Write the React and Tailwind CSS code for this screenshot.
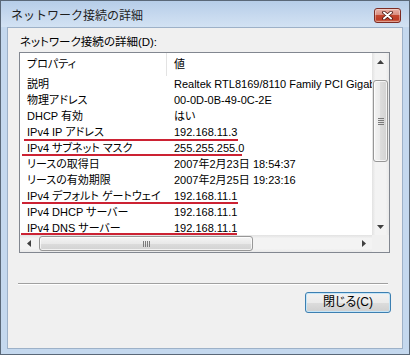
const rows = [
  { name: "説明", value: "Realtek RTL8169/8110 Family PCI Gigabit Ethernet NIC (NDIS 6.0)" },
  { name: "物理アドレス", value: "00-0D-0B-49-0C-2E" },
  { name: "DHCP 有効", value: "はい" },
  { name: "IPv4 IP アドレス", value: "192.168.11.3", mark: "left-[4px] w-[214px] bottom-[-1px]" },
  { name: "IPv4 サブネット マスク", value: "255.255.255.0", mark: "left-[2px] w-[220px] bottom-0" },
  { name: "リースの取得日", value: "2007年2月23日 18:54:37" },
  { name: "リースの有効期限", value: "2007年2月25日 19:23:16" },
  { name: "IPv4 デフォルト ゲートウェイ", value: "192.168.11.1", mark: "left-[2px] w-[216px] bottom-0" },
  { name: "IPv4 DHCP サーバー", value: "192.168.11.1" },
  { name: "IPv4 DNS サーバー", value: "192.168.11.1", mark: "left-[1px] w-[216px] bottom-[1px]" },
];

const Arrow = ({ dir }) => {
  const d = {
    up: "M3.5 0 L7 4 L0 4Z",
    down: "M0 0 L7 0 L3.5 4Z",
    left: "M4 0 L4 7 L0 3.5Z",
    right: "M0 0 L4 3.5 L0 7Z",
  }[dir];
  const vert = dir === "up" || dir === "down";
  return (
    <svg width={vert ? 7 : 4} height={vert ? 4 : 7} viewBox={vert ? "0 0 7 4" : "0 0 4 7"}>
      <path d={d} fill="#404040" />
    </svg>
  );
};

export default function App() {
  return (
    <div className="w-[410px] h-[355px] bg-[#c4d8ee] border border-[#5a6878] flex flex-col font-['Liberation_Sans','Noto_Sans_CJK_JP',sans-serif] text-[11px] text-black">
      {/* title bar */}
      <div className="h-[26px] flex items-start justify-between pl-[10px] pr-[8px] bg-[linear-gradient(to_bottom,#b6cde8,#c8daef_60%,#d2e2f3)]">
        <span className="mt-[5px] leading-[18px] text-[12px] text-[#1e1e1e] font-['Noto_Sans_CJK_JP',sans-serif]">ネットワーク接続の詳細</span>
        <div className="mt-[7px] w-[27px] h-[15px] rounded-[3px] border border-[#7d2c24] flex items-center justify-center bg-[linear-gradient(to_bottom,#e9b2a8_0%,#d98d80_45%,#c4472f_50%,#bd3c27_80%,#d4775c_100%)] shadow-[inset_0_0_0_1px_rgba(255,255,255,0.35)]">
          <svg width="11" height="9" viewBox="0 0 11 9">
            <path d="M2 1.5 L9 7.5 M9 1.5 L2 7.5" stroke="#4a1610" strokeWidth="3.6" strokeLinecap="round" />
            <path d="M2 1.5 L9 7.5 M9 1.5 L2 7.5" stroke="#ffffff" strokeWidth="2" strokeLinecap="round" />
          </svg>
        </div>
      </div>

      {/* client area */}
      <div className="mx-[6px] h-[322px] border border-[#9db1c8] bg-[#f0f0f0] flex flex-col [font-feature-settings:'palt']">
        <div className="pt-[7px] pl-[12px] leading-[14px] text-[11.5px]">ネットワーク接続の詳細(D):</div>

        {/* list view */}
        <div className="mt-[3px] ml-[11px] w-[371px] h-[201px] border border-[#828790] bg-white grid grid-cols-[1fr_17px] grid-rows-[1fr_17px]">
          <div className="overflow-hidden flex flex-col whitespace-nowrap">
            <div className="h-[23px] shrink-0 flex">
              <div className="w-[147px] shrink-0 pl-[7px] border-r border-[#e3e3e3] flex items-center">プロパティ</div>
              <div className="pl-[7px] flex items-center">値</div>
            </div>
            {rows.map((r) => (
              <div key={r.name} className="relative h-[16px] shrink-0 leading-[16px] flex">
                <div className="w-[147px] shrink-0 pl-[7px]">{r.name}</div>
                <div className="pl-[7px]">{r.value}</div>
                {r.mark && <span className={`absolute h-[2px] bg-[#cc2233] ${r.mark}`} />}
              </div>
            ))}
          </div>

          {/* vertical scrollbar */}
          <div className="flex flex-col bg-[linear-gradient(to_right,#e2e2e2,#f3f3f3_20%,#f3f3f3_80%,#e9e9e9)]">
            <div className="h-[17px] shrink-0 flex items-center justify-center">
              <Arrow dir="up" />
            </div>
            <div className="flex-1 flex flex-col">
              <div className="mt-[10px] mx-[1px] h-[82px] rounded-[3px] border border-[#979797] bg-[linear-gradient(to_right,#f4f4f4,#e9e9e9_50%,#dcdcdc_50%,#d2d2d2)] shadow-[inset_0_0_0_1px_rgba(255,255,255,0.7)] flex flex-col items-center justify-center gap-[1px]">
                <span className="w-[6px] h-[1px] bg-[#7a7a7a]" />
                <span className="w-[6px] h-[1px] bg-[#7a7a7a]" />
                <span className="w-[6px] h-[1px] bg-[#7a7a7a]" />
                <span className="w-[6px] h-[1px] bg-[#7a7a7a]" />
              </div>
            </div>
            <div className="h-[17px] shrink-0 flex items-center justify-center">
              <Arrow dir="down" />
            </div>
          </div>

          {/* horizontal scrollbar */}
          <div className="flex bg-[linear-gradient(to_bottom,#e2e2e2,#f3f3f3_20%,#f3f3f3_80%,#e9e9e9)]">
            <div className="w-[17px] shrink-0 flex items-center justify-center">
              <Arrow dir="left" />
            </div>
            <div className="flex-1 flex items-center">
              <div className="ml-[2px] w-[214px] h-[15px] rounded-[3px] border border-[#979797] bg-[linear-gradient(to_bottom,#f4f4f4,#e9e9e9_50%,#dcdcdc_50%,#d2d2d2)] shadow-[inset_0_0_0_1px_rgba(255,255,255,0.7)] flex items-center justify-center gap-[1px]">
                <span className="w-[1px] h-[6px] bg-[#7a7a7a]" />
                <span className="w-[1px] h-[6px] bg-[#7a7a7a]" />
                <span className="w-[1px] h-[6px] bg-[#7a7a7a]" />
                <span className="w-[1px] h-[6px] bg-[#7a7a7a]" />
              </div>
            </div>
            <div className="w-[17px] shrink-0 flex items-center justify-center">
              <Arrow dir="right" />
            </div>
          </div>
          <div className="bg-[#f0f0f0]" />
        </div>

        {/* separator */}
        <div className="mt-[30px] ml-[10px] w-[370px] border-t border-b border-t-[#a0a0a0] border-b-white" />

        {/* buttons */}
        <div className="mt-[7px] flex justify-end pr-[11px]">
          <button className="w-[86px] h-[21px] rounded-[3px] border border-[#3c7fb1] bg-[linear-gradient(to_bottom,#f2f2f2,#ebebeb_50%,#dddddd_50%,#cfcfcf)] shadow-[inset_0_0_0_1px_#c4e5f8] leading-[19px] text-[12px]">
            閉じる(C)
          </button>
        </div>
      </div>
    </div>
  );
}
